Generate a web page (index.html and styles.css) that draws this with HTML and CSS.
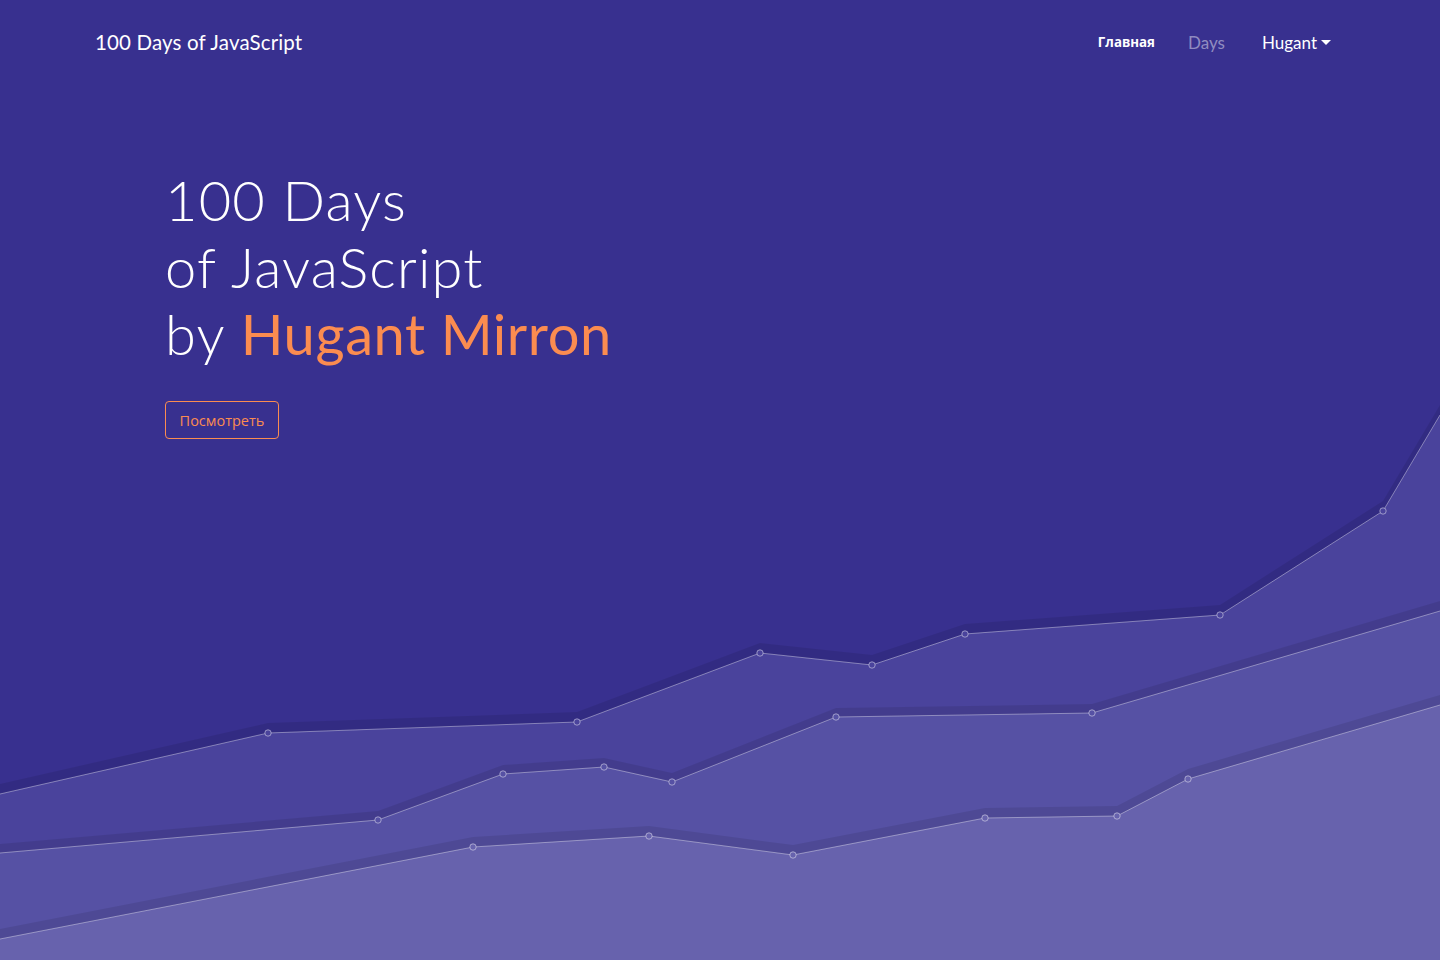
FILE: index.html
```html
<!DOCTYPE html>
<html lang="ru">
<head>
<meta charset="utf-8">
<title>100 Days of JavaScript</title>
<link rel="stylesheet" href="styles.css">
</head>
<body>
<div class="page">
  <svg class="chart" viewBox="0 0 1440 960" preserveAspectRatio="none" aria-hidden="true">
    <g class="layer l1">
      <polygon class="shade" points="0,784 268,723 577,712 760,643 872,655 965,624 1220,605 1383,501 1440,405 1440,960 0,960"/>
      <polygon class="fill" points="0,794 268,733 577,722 760,653 872,665 965,634 1220,615 1383,511 1440,415 1440,960 0,960"/>
      <polyline class="line" points="0,794 268,733 577,722 760,653 872,665 965,634 1220,615 1383,511 1440,415"/>
      <circle cx="268" cy="733" r="3.2"/><circle cx="577" cy="722" r="3.2"/><circle cx="760" cy="653" r="3.2"/><circle cx="872" cy="665" r="3.2"/><circle cx="965" cy="634" r="3.2"/><circle cx="1220" cy="615" r="3.2"/><circle cx="1383" cy="511" r="3.2"/>
    </g>
    <g class="layer l2">
      <polygon class="shade" points="0,844 378,811 503,765 604,758 672,773 836,708 1092,704 1440,601 1440,960 0,960"/>
      <polygon class="fill" points="0,853 378,820 503,774 604,767 672,782 836,717 1092,713 1440,611 1440,960 0,960"/>
      <polyline class="line" points="0,853 378,820 503,774 604,767 672,782 836,717 1092,713 1440,611"/>
      <circle cx="378" cy="820" r="3.2"/><circle cx="503" cy="774" r="3.2"/><circle cx="604" cy="767" r="3.2"/><circle cx="672" cy="782" r="3.2"/><circle cx="836" cy="717" r="3.2"/><circle cx="1092" cy="713" r="3.2"/>
    </g>
    <g class="layer l3">
      <polygon class="shade" points="0,929 473,837 649,826 793,845 985,808 1117,806 1188,769 1440,695 1440,960 0,960"/>
      <polygon class="fill" points="0,939 473,847 649,836 793,855 985,818 1117,816 1188,779 1440,705 1440,960 0,960"/>
      <polyline class="line" points="0,939 473,847 649,836 793,855 985,818 1117,816 1188,779 1440,705"/>
      <circle cx="473" cy="847" r="3.2"/><circle cx="649" cy="836" r="3.2"/><circle cx="793" cy="855" r="3.2"/><circle cx="985" cy="818" r="3.2"/><circle cx="1117" cy="816" r="3.2"/><circle cx="1188" cy="779" r="3.2"/>
    </g>
  </svg>

  <header class="navbar">
    <a class="brand" href="#">100 Days of JavaScript</a>
    <nav class="nav">
      <a class="nav-link active" href="#">Главная</a>
      <a class="nav-link muted" href="#">Days</a>
      <a class="nav-link dropdown" href="#">Hugant<span class="caret"></span></a>
    </nav>
  </header>

  <main class="hero">
    <h1 class="title">100 Days<br>of JavaScript<br>by <span class="accent">Hugant Mirron</span></h1>
    <a class="btn" href="#">Посмотреть</a>
  </main>
</div>
</body>
</html>
```
FILE: styles.css
```css
* { box-sizing: border-box; }
html, body { margin: 0; padding: 0; }
body {
  background: #38308f;
  font-family: "Lato", "Open Sans", sans-serif;
  color: #fff;
  overflow: hidden;
}
.page {
  position: relative;
  width: 1440px;
  height: 960px;
  overflow: hidden;
}
.chart {
  position: absolute;
  left: 0;
  top: 0;
  width: 1440px;
  height: 960px;
  z-index: 0;
}
.chart .shade { fill: rgba(0, 0, 0, 0.09); }
.chart .l1 .fill { fill: #4a439c; }
.chart .l2 .fill { fill: #5651a4; }
.chart .l3 .fill { fill: #6762ad; }
.chart .line { fill: none; stroke: rgba(255, 255, 255, 0.38); stroke-width: 1; }
.chart .l1 circle { fill: #4a439c; }
.chart .l2 circle { fill: #5651a4; }
.chart .l3 circle { fill: #6762ad; }
.chart circle { stroke: rgba(255, 255, 255, 0.45); stroke-width: 1; }

.navbar {
  position: relative;
  z-index: 1;
  display: flex;
  align-items: center;
  justify-content: space-between;
  height: 84px;
  padding: 0 109px 0 95px;
}
.brand {
  color: #fff;
  text-decoration: none;
  font-size: 20.5px;
  font-weight: 400;
  letter-spacing: 0.15px;
}
.nav {
  display: flex;
  align-items: center;
}
.nav-link {
  color: #fff;
  text-decoration: none;
  font-size: 17px;
}
.nav-link.active {
  font-family: "Open Sans", sans-serif;
  font-weight: 700;
  font-size: 13.3px;
  margin-right: 33px;
}
.nav-link.muted {
  color: rgba(255, 255, 255, 0.45);
  margin-right: 37px;
}
.dropdown { display: inline-flex; align-items: center; }
.caret {
  display: inline-block;
  margin-left: 4px;
  width: 0;
  height: 0;
  border-left: 5px solid transparent;
  border-right: 5px solid transparent;
  border-top: 5px solid #fff;
}

.hero {
  position: relative;
  z-index: 1;
  padding: 82px 0 0 165px;
}
.title {
  margin: 0 0 34px;
  font-size: 56px;
  line-height: 67px;
  font-weight: 300;
  letter-spacing: 1.2px;
}
.accent {
  color: #fb8c50;
  font-weight: 400;
  letter-spacing: 0.6px;
}
.btn {
  display: inline-flex;
  align-items: center;
  justify-content: center;
  width: 114px;
  height: 38px;
  border: 1px solid #fb8c50;
  border-radius: 4px;
  color: #fb8c50;
  text-decoration: none;
  font-family: "Open Sans", sans-serif;
  font-size: 14.5px;
}
```
